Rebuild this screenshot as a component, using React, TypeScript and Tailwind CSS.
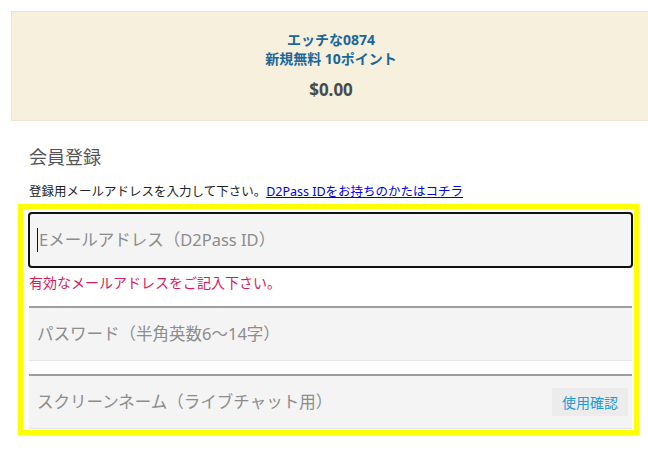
import React from 'react';

const font = { fontFamily: '"Noto Sans", "Noto Sans CJK JP", sans-serif' };

export default function App() {
  return (
    <div className="w-[648px] h-[450px] overflow-hidden bg-white" style={font}>
      {/* campaign banner */}
      <div className="ml-[11px] mt-[11px] w-[640px] h-[110px] bg-[#f7f0dc] border border-[#ebe3cc] flex flex-col items-center pt-[18px]">
        <p className="text-[14px] font-bold leading-[20px] text-[#19679b]">エッチな0874</p>
        <p className="text-[14px] font-bold leading-[20px] text-[#19679b] mt-[-1px]">新規無料 10ポイント</p>
        <p className="text-[17px] font-bold leading-[22px] text-[#4a4a4a] mt-[10px]">$0.00</p>
      </div>

      <div className="pl-[29px]">
        <h2 className="text-[18px] leading-[24px] text-[#555] mt-[24px]">会員登録</h2>
        <p className="text-[12.5px] leading-[18px] text-[#222] mt-[14px]">
          登録用メールアドレスを入力して下さい。<a href="#" className="text-[#0000ee] underline">D2Pass IDをお持ちのかたはコチラ</a>
        </p>
      </div>

      {/* highlighted form */}
      <div className="ml-[18px] mt-[3px] w-[621px] border-[5px] border-[#ffff00] pl-[5px] pr-0 pt-[3px] pb-[1px]">
        <div className="w-[605px] flex flex-col">
          <div className="h-[56px] bg-[#f4f4f4] border-2 border-[#111] rounded-[4px] flex items-center pl-[7px]">
            <span className="w-px h-[24px] bg-[#111] mr-[1px]" />
            <span className="text-[16.5px] text-[#8c8c8c]">Eメールアドレス（D2Pass ID）</span>
          </div>
          <p className="text-[14px] leading-[20px] text-[#d81b5a] mt-[5px] pl-[1px]">有効なメールアドレスをご記入下さい。</p>

          <div className="mt-[13px] ml-[1px] w-[603px] h-[55px] bg-[#f4f4f4] border-t-2 border-[#9e9e9e] border-b border-b-[#e6e6e6] flex items-center pl-[8px]">
            <span className="text-[16.5px] text-[#8c8c8c]">パスワード（半角英数6～14字）</span>
          </div>

          <div className="mt-[13px] ml-[1px] w-[603px] h-[55px] bg-[#f4f4f4] border-t-2 border-[#9e9e9e] border-b border-b-[#e6e6e6] flex items-center justify-between pl-[8px] pr-[4px]">
            <span className="text-[16.5px] text-[#8c8c8c]">スクリーンネーム（ライブチャット用）</span>
            <button className="h-[28px] w-[76px] bg-[#ececec] text-[14px] text-[#1e9bd7] flex items-center justify-center">使用確認</button>
          </div>
        </div>
      </div>
    </div>
  );
}
